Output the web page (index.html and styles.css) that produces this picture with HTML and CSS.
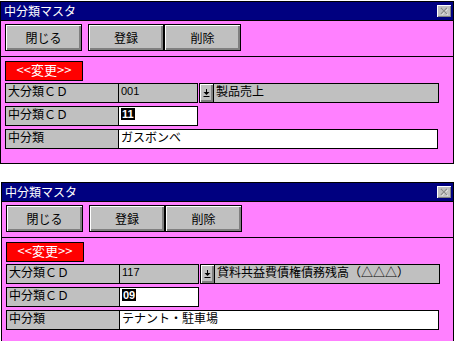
FILE: index.html
```html
<!DOCTYPE html>
<html lang="ja">
<head>
    <meta charset="UTF-8">
    <title>中分類マスタ</title>
    <link rel="stylesheet" href="styles.css">
</head>
<body>
    <!-- 1件目: 製品売上 -->
    <div class="window">
        <div class="titlebar">
            <span class="title">中分類マスタ</span>
            <span class="close-btn">
                <svg width="9" height="8" viewBox="0 0 9 8">
                    <path d="M1.5 1.5 L7.5 7.5 M7.5 1.5 L1.5 7.5" stroke="#ffffff" stroke-width="1.4"/>
                    <path d="M1 1 L7 7 M7 1 L1 7" stroke="#8a8a8a" stroke-width="1.4"/>
                </svg>
            </span>
        </div>
        <div class="toolbar">
            <button class="btn">閉じる</button>
            <div class="btn-pair">
                <button class="btn">登録</button>
                <button class="btn">削除</button>
            </div>
        </div>
        <div class="form">
            <div class="mode-badge">&lt;&lt;変更&gt;&gt;</div>
            <div class="row">
                <div class="label">大分類ＣＤ</div>
                <div class="cell code">001</div>
                <div class="drop-btn">
                    <svg width="7" height="8" viewBox="0 0 7 8">
                        <path d="M3.5 0 V4" stroke="#000" stroke-width="1"/>
                        <path d="M0.5 3 H6.5 L3.5 6 Z" fill="#000"/>
                        <path d="M0.5 7.5 H6.5" stroke="#000" stroke-width="1"/>
                    </svg>
                </div>
                <div class="cell name">製品売上</div>
            </div>
            <div class="row">
                <div class="label">中分類ＣＤ</div>
                <div class="cell code input"><span class="sel">11</span></div>
            </div>
            <div class="row">
                <div class="label">中分類</div>
                <div class="cell wide input">ガスボンベ</div>
            </div>
        </div>
    </div>

    <!-- 2件目: 貸料共益費 -->
    <div class="window second">
        <div class="titlebar">
            <span class="title">中分類マスタ</span>
            <span class="close-btn">
                <svg width="9" height="8" viewBox="0 0 9 8">
                    <path d="M1.5 1.5 L7.5 7.5 M7.5 1.5 L1.5 7.5" stroke="#ffffff" stroke-width="1.4"/>
                    <path d="M1 1 L7 7 M7 1 L1 7" stroke="#8a8a8a" stroke-width="1.4"/>
                </svg>
            </span>
        </div>
        <div class="toolbar">
            <button class="btn">閉じる</button>
            <div class="btn-pair">
                <button class="btn">登録</button>
                <button class="btn">削除</button>
            </div>
        </div>
        <div class="form">
            <div class="mode-badge">&lt;&lt;変更&gt;&gt;</div>
            <div class="row">
                <div class="label">大分類ＣＤ</div>
                <div class="cell code">117</div>
                <div class="drop-btn">
                    <svg width="7" height="8" viewBox="0 0 7 8">
                        <path d="M3.5 0 V4" stroke="#000" stroke-width="1"/>
                        <path d="M0.5 3 H6.5 L3.5 6 Z" fill="#000"/>
                        <path d="M0.5 7.5 H6.5" stroke="#000" stroke-width="1"/>
                    </svg>
                </div>
                <div class="cell name">貸料共益費債権債務残高（△△△）</div>
            </div>
            <div class="row">
                <div class="label">中分類ＣＤ</div>
                <div class="cell code input"><span class="sel">09</span></div>
            </div>
            <div class="row">
                <div class="label">中分類</div>
                <div class="cell wide input">テナント・駐車場</div>
            </div>
        </div>
    </div>
</body>
</html>
```

FILE: styles.css
```css
:root {
    --window-bg: #ff80ff;
    --title-bg: #000080;
    --face: #c0c0c0;
    --shadow: #808080;
    --line: #000000;
}

body {
    margin: 0;
    background-color: #ffffff;
    font-family: "Noto Sans CJK JP", sans-serif;
    font-size: 12px;
    color: #000000;
}

.window {
    width: 452px;
    margin-top: 1px;
    border: 1px solid var(--line);
    background-color: var(--window-bg);
}

.window.second {
    width: 451px;
    margin-top: 18px;
    margin-left: 1px;
}

/* タイトルバー */
.titlebar {
    height: 18px;
    background-color: var(--title-bg);
    border-bottom: 1px solid var(--line);
    display: flex;
    align-items: center;
    justify-content: space-between;
    padding: 0 2px 0 3px;
    color: #ffffff;
}

.title {
    font-size: 12px;
    line-height: 18px;
}

.close-btn {
    width: 14px;
    height: 12px;
    box-sizing: border-box;
    background-color: var(--face);
    box-shadow: inset 1px 1px #ffffff, inset -1px -1px var(--shadow);
    display: flex;
    align-items: center;
    justify-content: center;
}

/* ボタン */
.toolbar {
    height: 32px;
    border-bottom: 1px solid var(--line);
    display: flex;
    align-items: flex-start;
    gap: 6px;
    padding: 3px 4px 0;
}

.btn-pair {
    display: flex;
}

.btn {
    width: 77px;
    height: 27px;
    margin: 0;
    padding: 0;
    font-family: inherit;
    font-size: 12px;
    color: #000000;
    background-color: var(--face);
    border: 1px solid var(--line);
    box-shadow: inset 1px 1px #ffffff, inset -1px -1px var(--shadow), inset -2px -2px var(--shadow);
}

.btn-pair .btn:first-child {
    width: 76px;
}

/* 入力欄 */
.form {
    padding: 4px 0 14px 4px;
}

.mode-badge {
    width: 78px;
    height: 20px;
    box-sizing: border-box;
    margin-bottom: 2px;
    background-color: #ff0000;
    border: 1px solid var(--line);
    color: #ffffff;
    font-size: 13px;
    text-align: center;
    line-height: 16px;
}

.row {
    display: flex;
    height: 20px;
    margin-bottom: 3px;
}

.row:last-child {
    margin-bottom: 0;
}

.label,
.cell,
.drop-btn {
    box-sizing: border-box;
    height: 20px;
    border: 1px solid var(--line);
    line-height: 14px;
    white-space: nowrap;
    overflow: hidden;
}

.label {
    width: 114px;
    padding-left: 2px;
    background-color: var(--face);
}

.cell {
    margin-left: -1px;
    padding-left: 2px;
    background-color: var(--face);
}

.cell.input {
    background-color: #ffffff;
}

.code {
    width: 80px;
    font-family: "Liberation Sans", sans-serif;
    font-size: 11px;
    line-height: 15px;
}

.sel {
    background-color: #000000;
    color: #ffffff;
    font-weight: bold;
    padding: 0 1px;
}

.drop-btn {
    width: 15px;
    margin-left: 1px;
    background-color: var(--face);
    box-shadow: inset 1px 1px #ffffff, inset -1px -1px var(--shadow), inset -2px -2px var(--shadow);
    display: flex;
    align-items: center;
    justify-content: center;
}

.name {
    width: 226px;
}

.wide {
    width: 320px;
}
```
